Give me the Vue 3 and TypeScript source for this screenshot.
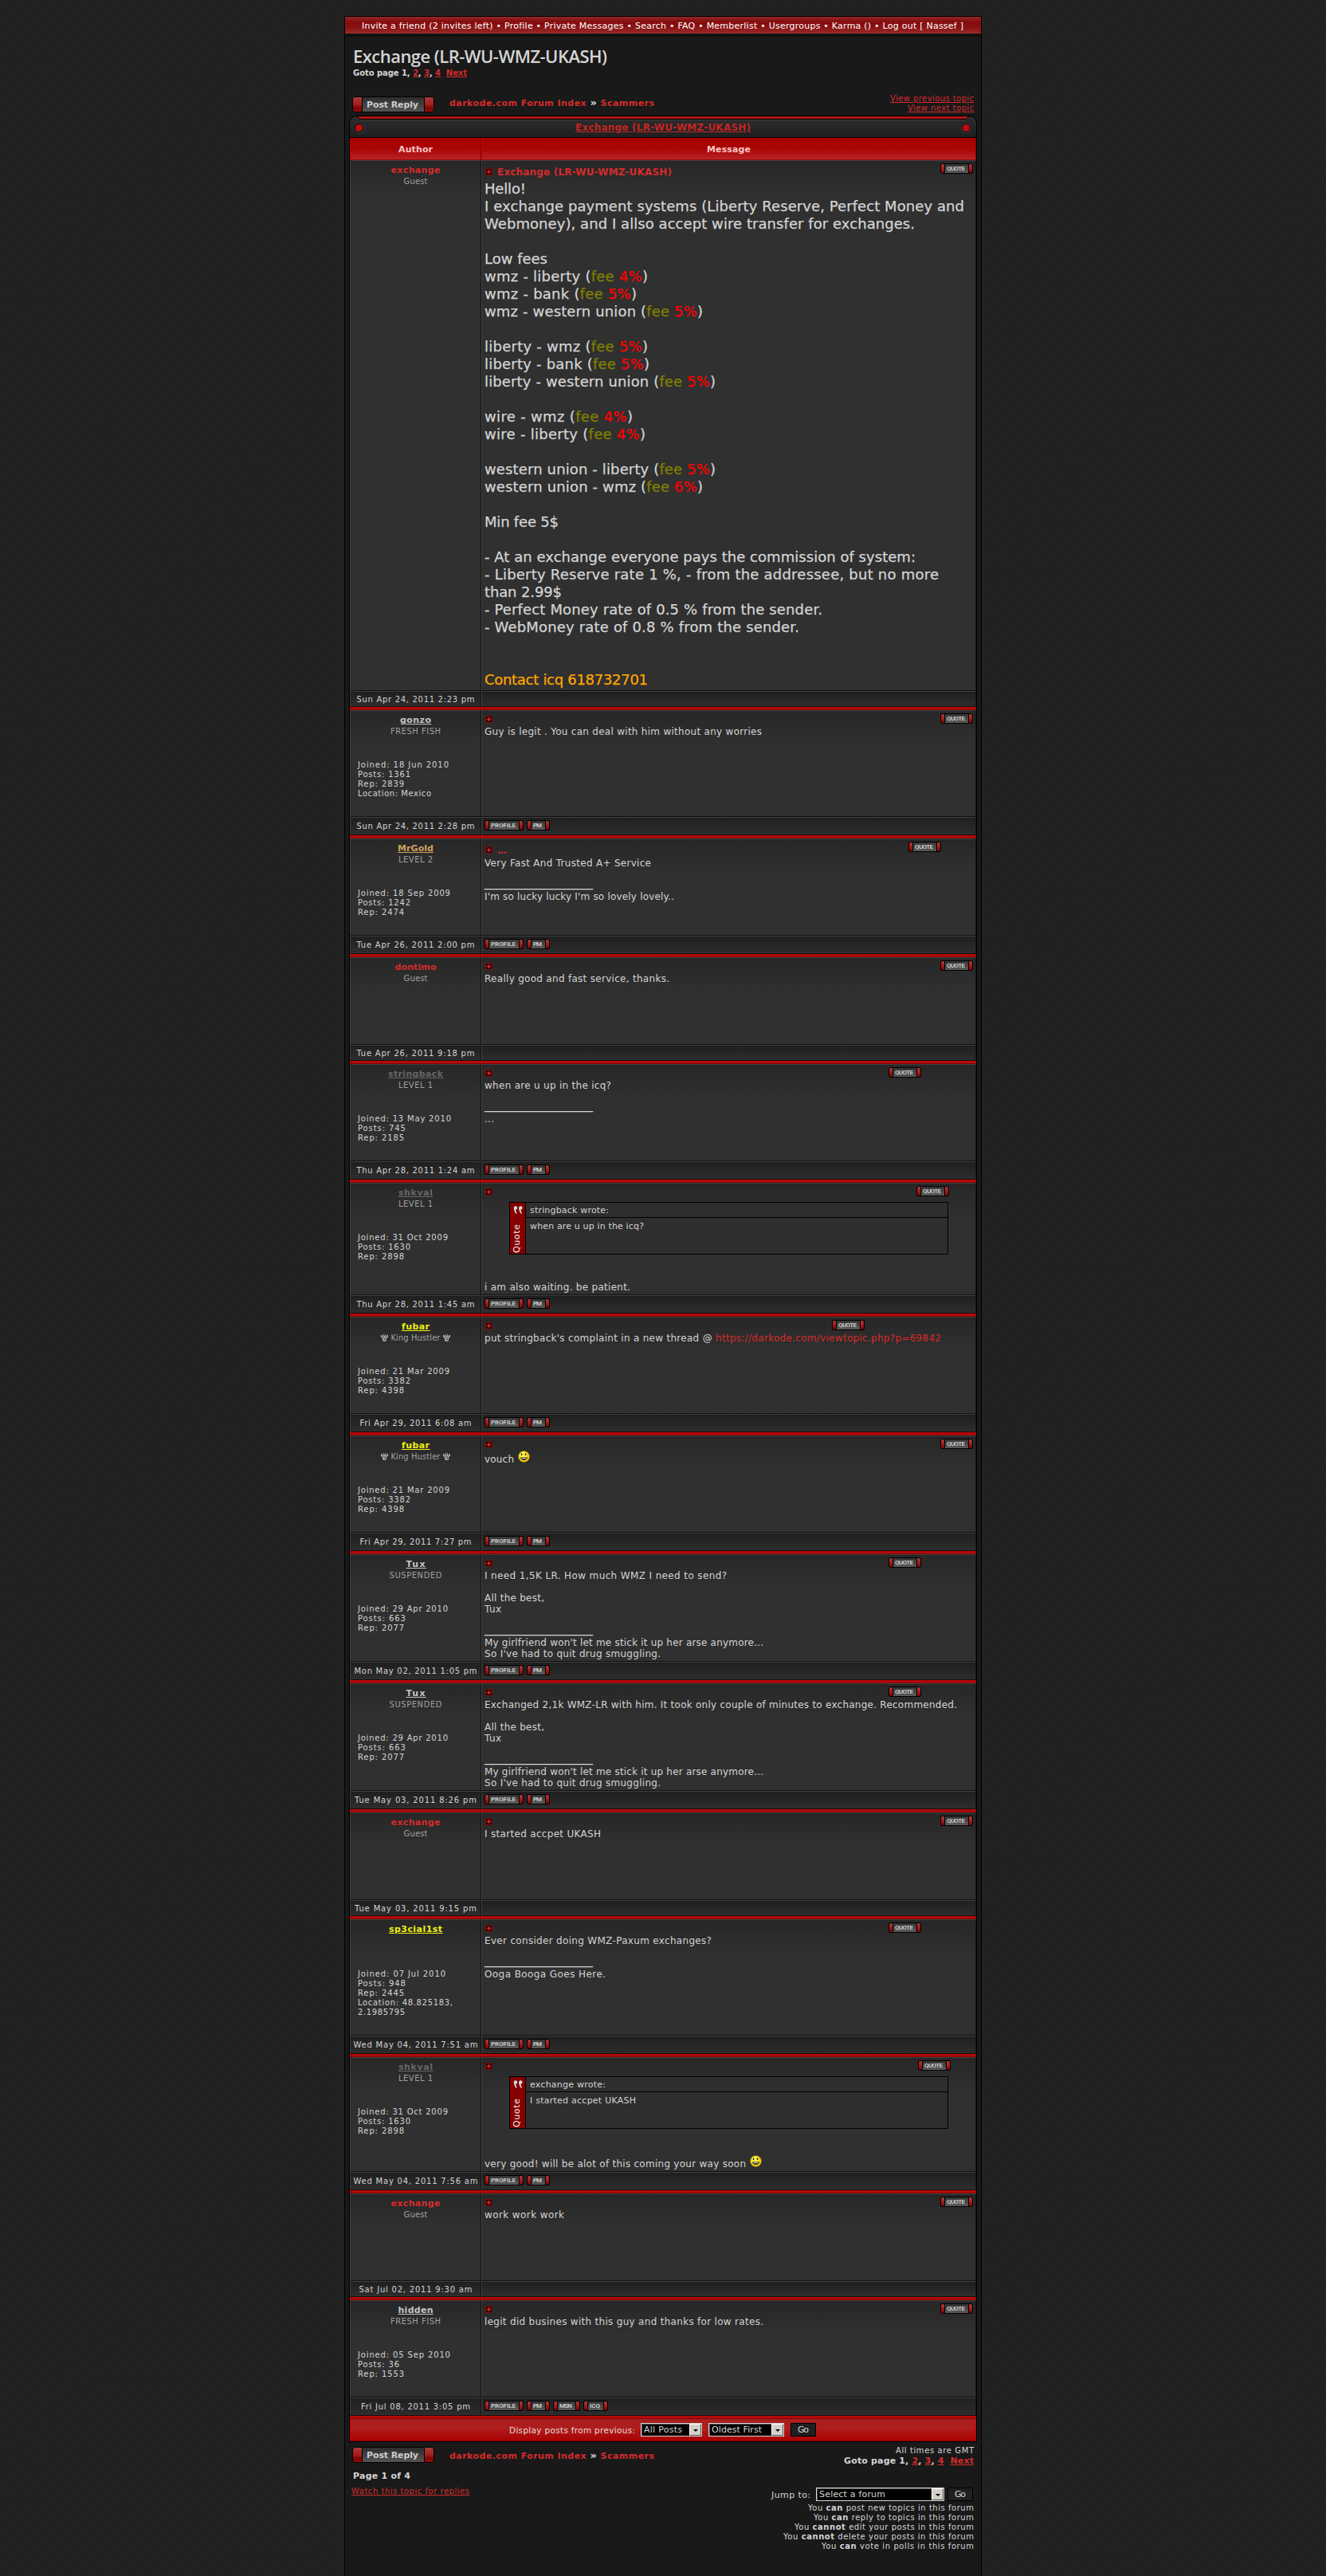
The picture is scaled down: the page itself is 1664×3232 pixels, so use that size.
<script setup lang="ts">
import type { Directive } from 'vue'

// Spreads a run of text to a given pixel width by adjusting its tracking.
const vFit: Directive<HTMLElement, number> = {
  mounted(el, { value }) {
    const gaps = (el.textContent ?? '').length - 1
    if (!value || gaps < 1) return
    const spacing = (value - el.getBoundingClientRect().width) / gaps
    el.style.letterSpacing = `${spacing}px`
    el.style.marginRight = `${-spacing}px`
  },
}

interface Part { t: string; c?: string }
interface Line { parts?: Part[]; w?: number; rule?: boolean; smiley?: boolean }
interface Info { t: string; w: number }
interface Post {
  name: string
  nameW: number
  tone: string
  rank?: string
  rankW?: number
  crowns?: boolean
  info: Info[]
  date: string
  dateW: number
  h: number
  title?: string
  titleW?: number
  head: number
  shift?: number
  big?: boolean
  quote?: { by: string; byW: number; text: string; textW: number }
  lines: Line[]
  buttons: string[]
}

const line = (t: string, w: number): Line => ({ parts: [{ t }], w })
const gap: Line = {}
const rule: Line = { rule: true }
const fee = (a: string, p: string, w: number): Line => ({
  parts: [{ t: a + ' (' }, { t: 'fee ', c: 'olive' }, { t: p, c: 'hot' }, { t: ')' }],
  w,
})

const postsWidth: Record<number, number> = { 2: 52, 3: 60, 4: 66 }
const stats = (joined: string, w: number, posts: string, rep: string): Info[] => [
  { t: `Joined: ${joined}`, w },
  { t: `Posts: ${posts}`, w: postsWidth[posts.length] },
  { t: `Rep: ${rep}`, w: 58 },
]

const buttonWidth: Record<string, number[]> = {
  PROFILE: [49, 31], PM: [29, 11], MSN: [34, 16], ICQ: [31, 13], QUOTE: [41, 23],
}
const std = ['PROFILE', 'PM']
const tuxSig = [
  gap, line('All the best,', 75), line('Tux', 21), gap, rule,
  line("My girlfriend won't let me stick it up her arse anymore...", 350),
  line("So I've had to quit drug smuggling.", 221),
]

const posts: Post[] = [
  {
    name: 'exchange', nameW: 62, tone: 'red', rank: 'Guest', rankW: 30, info: [],
    date: 'Sun Apr 24, 2011 2:23 pm', dateW: 148, h: 666,
    title: 'Exchange (LR-WU-WMZ-UKASH)', titleW: 219, head: 24, big: true,
    lines: [
      line('Hello!', 52),
      line('I exchange payment systems (Liberty Reserve, Perfect Money and', 602),
      line('Webmoney), and I allso accept wire transfer for exchanges.', 540),
      gap,
      line('Low fees', 79),
      fee('wmz - liberty', '4%', 205),
      fee('wmz - bank', '5%', 191),
      fee('wmz - western union', '5%', 274),
      gap,
      fee('liberty - wmz', '5%', 205),
      fee('liberty - bank', '5%', 207),
      fee('liberty - western union', '5%', 290),
      gap,
      fee('wire - wmz', '4%', 186),
      fee('wire - liberty', '4%', 202),
      gap,
      fee('western union - liberty', '5%', 290),
      fee('western union - wmz', '6%', 274),
      gap,
      line('Min fee 5$', 93),
      gap,
      line('- At an exchange everyone pays the commission of system:', 541),
      line('- Liberty Reserve rate 1 %, - from the addressee, but no more', 570),
      line('than 2.99$', 97),
      line('- Perfect Money rate of 0.5 % from the sender.', 424),
      line('- WebMoney rate of 0.8 % from the sender.', 395),
      gap, gap,
      { parts: [{ t: 'Contact icq 618732701', c: 'orange' }], w: 205 },
    ],
    buttons: [],
  },
  {
    name: 'gonzo', nameW: 39, tone: 'pale', rank: 'FRESH FISH', rankW: 63,
    info: [...stats('18 Jun 2010', 114, '1361', '2839'), { t: 'Location: Mexico', w: 92 }],
    date: 'Sun Apr 24, 2011 2:28 pm', dateW: 148, h: 134, head: 19,
    lines: [line('Guy is legit . You can deal with him without any worries', 348)],
    buttons: std,
  },
  {
    name: 'MrGold', nameW: 45, tone: 'gold', rank: 'LEVEL 2', rankW: 43,
    info: stats('18 Sep 2009', 116, '1242', '2474'),
    date: 'Tue Apr 26, 2011 2:00 pm', dateW: 148, h: 122,
    title: '...', titleW: 12, head: 23, shift: 40,
    lines: [line('Very Fast And Trusted A+ Service', 209), gap, rule, line("I'm so lucky lucky I'm so lovely lovely..", 238)],
    buttons: std,
  },
  {
    name: 'dontimo', nameW: 52, tone: 'red', rank: 'Guest', rankW: 30, info: [],
    date: 'Tue Apr 26, 2011 9:18 pm', dateW: 148, h: 110, head: 19,
    lines: [line('Really good and fast service, thanks.', 232)],
    buttons: [],
  },
  {
    name: 'stringback', nameW: 69, tone: 'grey', rank: 'LEVEL 1', rankW: 43,
    info: stats('13 May 2010', 117, '745', '2185'),
    date: 'Thu Apr 28, 2011 1:24 am', dateW: 148, h: 122, head: 19, shift: 65,
    lines: [line('when are u up in the icq?', 159), gap, rule, line('...', 12)],
    buttons: std,
  },
  {
    name: 'shkval', nameW: 43, tone: 'grey', rank: 'LEVEL 1', rankW: 43,
    info: stats('31 Oct 2009', 113, '1630', '2898'),
    date: 'Thu Apr 28, 2011 1:45 am', dateW: 148, h: 141, head: 23, shift: 30,
    quote: { by: 'stringback wrote:', byW: 99, text: 'when are u up in the icq?', textW: 143 },
    lines: [line('i am also waiting. be patient.', 183)],
    buttons: std,
  },
  {
    name: 'fubar', nameW: 35, tone: 'yellow', rank: 'King Hustler', rankW: 62, crowns: true,
    info: stats('21 Mar 2009', 115, '3382', '4398'),
    date: 'Fri Apr 29, 2011 6:08 am', dateW: 140, h: 122, head: 19, shift: 136,
    lines: [{
      parts: [{ t: "put stringback's complaint in a new thread @ " }, { t: 'https://darkode.com/viewtopic.php?p=69842', c: 'link' }],
      w: 573,
    }],
    buttons: std,
  },
  {
    name: 'fubar', nameW: 35, tone: 'yellow', rank: 'King Hustler', rankW: 62, crowns: true,
    info: stats('21 Mar 2009', 115, '3382', '4398'),
    date: 'Fri Apr 29, 2011 7:27 pm', dateW: 140, h: 122, head: 19,
    lines: [{ parts: [{ t: 'vouch' }], w: 37, smiley: true }],
    buttons: std,
  },
  {
    name: 'Tux', nameW: 24, tone: 'pale', rank: 'SUSPENDED', rankW: 66,
    info: stats('29 Apr 2010', 113, '663', '2077'),
    date: 'Mon May 02, 2011 1:05 pm', dateW: 154, h: 135, head: 19, shift: 65,
    lines: [line('I need 1,5K LR. How much WMZ I need to send?', 304), ...tuxSig],
    buttons: std,
  },
  {
    name: 'Tux', nameW: 24, tone: 'pale', rank: 'SUSPENDED', rankW: 66,
    info: stats('29 Apr 2010', 113, '663', '2077'),
    date: 'Tue May 03, 2011 8:26 pm', dateW: 153, h: 135, head: 19, shift: 65,
    lines: [line('Exchanged 2,1k WMZ-LR with him. It took only couple of minutes to exchange. Recommended.', 593), ...tuxSig],
    buttons: std,
  },
  {
    name: 'exchange', nameW: 62, tone: 'red', rank: 'Guest', rankW: 30, info: [],
    date: 'Tue May 03, 2011 9:15 pm', dateW: 153, h: 110, head: 19,
    lines: [line('I started accpet UKASH', 146)],
    buttons: [],
  },
  {
    name: 'sp3cial1st', nameW: 67, tone: 'yellow',
    info: [...stats('07 Jul 2010', 110, '948', '2445'), { t: 'Location: 48.825183,', w: 119 }, { t: '2.1985795', w: 59 }],
    date: 'Wed May 04, 2011 7:51 am', dateW: 156, h: 146, head: 19, shift: 65,
    lines: [line('Ever consider doing WMZ-Paxum exchanges?', 285), gap, rule, line('Ooga Booga Goes Here.', 152)],
    buttons: std,
  },
  {
    name: 'shkval', nameW: 43, tone: 'grey', rank: 'LEVEL 1', rankW: 43,
    info: stats('31 Oct 2009', 113, '1630', '2898'),
    date: 'Wed May 04, 2011 7:56 am', dateW: 156, h: 144, head: 23, shift: 28,
    quote: { by: 'exchange wrote:', byW: 95, text: 'I started accpet UKASH', textW: 133 },
    lines: [{ parts: [{ t: 'very good! will be alot of this coming your way soon' }], w: 328, smiley: true }],
    buttons: std,
  },
  {
    name: 'exchange', nameW: 62, tone: 'red', rank: 'Guest', rankW: 30, info: [],
    date: 'Sat Jul 02, 2011 9:30 am', dateW: 142, h: 110, head: 19,
    lines: [line('work work work', 100)],
    buttons: [],
  },
  {
    name: 'hidden', nameW: 44, tone: 'pale', rank: 'FRESH FISH', rankW: 63,
    info: stats('05 Sep 2010', 116, '36', '1553'),
    date: 'Fri Jul 08, 2011 3:05 pm', dateW: 137, h: 122, head: 19,
    lines: [line('legit did busines with this guy and thanks for low rates.', 350)],
    buttons: ['PROFILE', 'PM', 'MSN', 'ICQ'],
  },
]

const rules = [
  { can: 'can', rest: 'post new topics in this forum', w: 208 },
  { can: 'can', rest: 'reply to topics in this forum', w: 201 },
  { can: 'cannot', rest: 'edit your posts in this forum', w: 225 },
  { can: 'cannot', rest: 'delete your posts in this forum', w: 239 },
  { can: 'can', rest: 'vote in polls in this forum', w: 191 },
]
</script>

<template>
  <div class="page">
    <nav class="nav"><span v-fit="755">Invite a friend (2 invites left) • Profile • Private Messages • Search • FAQ • Memberlist • Usergroups • Karma () • Log out [ Nassef ]</span></nav>

    <header class="top">
      <h1><span v-fit="319">Exchange (LR-WU-WMZ-UKASH)</span></h1>
      <div class="goto"><span v-fit="143">Goto page 1, <a>2</a>, <a>3</a>, <a>4</a>&nbsp; <a>Next</a></span></div>
    </header>

    <div class="bar">
      <div class="reply"><i></i><b><span v-fit="65">Post Reply</span></b><i></i></div>
      <div class="crumb"><span v-fit="257">darkode.com Forum Index <em>»</em> Scammers</span></div>
      <div class="views">
        <div><a v-fit="105">View previous topic</a></div>
        <div><a v-fit="83">View next topic</a></div>
      </div>
    </div>

    <main class="board">
      <div class="cap">
        <svg class="lip" width="788" height="28" viewBox="0 0 788 28">
          <defs>
            <linearGradient id="capfill" x1="0" y1="0" x2="0" y2="1">
              <stop offset="0" stop-color="#2d2d2d" /><stop offset="1" stop-color="#1f1f1f" />
            </linearGradient>
            <radialGradient id="halo"><stop offset=".55" stop-color="#000" /><stop offset=".7" stop-color="#3a3a3a" /><stop offset="1" stop-color="#2a2a2a" stop-opacity="0" /></radialGradient>
          </defs>
          <path d="M0 28V9Q1 0 10 0H778Q787 0 788 9V28Z" fill="#000" />
          <path d="M1 27V9Q2 1 9 1Q12 2 14 4.500H774Q776 2 779 1Q786 1 787 9V27Z" fill="url(#capfill)" />
          <path d="M10 0H778L774 5H15Q12 4 10 0Z" fill="#000" />
          <path d="M11 1H777L774 4H15Q12 3 11 1Z" fill="#b01414" />
          <path d="M15 5.500H773" stroke="#3c3c3c" />
          <circle cx="13.500" cy="16" r="7.500" fill="url(#halo)" /><circle cx="12.500" cy="15.500" r="5" fill="#b80f0f" stroke="#140404" />
          <circle cx="774.500" cy="16" r="7.500" fill="url(#halo)" /><circle cx="774.500" cy="15.500" r="5" fill="#b80f0f" stroke="#140404" />
        </svg>
        <a class="captitle" v-fit="220">Exchange (LR-WU-WMZ-UKASH)</a>
      </div>

      <div class="rows">
        <div class="heads">
          <div class="th c1"><span v-fit="43">Author</span></div>
          <div class="th c2"><span v-fit="55">Message</span></div>
        </div>

        <template v-for="(p, i) in posts" :key="i">
          <div v-if="i" class="sep"></div>
          <div class="row" :style="{ height: p.h + 'px' }">
            <div class="cell c1 author">
              <div class="name" :class="p.tone"><span v-fit="p.nameW">{{ p.name }}</span></div>
              <div class="rank">
                <svg v-if="p.crowns" class="crown" width="9" height="9" viewBox="0 0 9 9"><path d="M0 1H2V3H3V0H4V2H5V0H6V3H7V1H9V4H8V5H7V8L6 9H3L2 8V5H1V4H0Z" fill="#a0a0a0" /><path d="M3 4H4V5H3ZM5 4H6V5H5ZM4 6H6V7H4Z" fill="#333" /></svg>
                <span v-if="p.rank" v-fit="p.rankW">{{ p.rank }}</span>
                <svg v-if="p.crowns" class="crown" width="9" height="9" viewBox="0 0 9 9"><path d="M0 1H2V3H3V0H4V2H5V0H6V3H7V1H9V4H8V5H7V8L6 9H3L2 8V5H1V4H0Z" fill="#a0a0a0" /><path d="M3 4H4V5H3ZM5 4H6V5H5ZM4 6H6V7H4Z" fill="#333" /></svg>
              </div>
              <div class="info">
                <div v-for="s in p.info" :key="s.t"><span v-fit="s.w">{{ s.t }}</span></div>
              </div>
            </div>
            <div class="cell c2 msg" :class="{ big: p.big }">
              <div class="mhead" :class="{ titled: p.title }" :style="{ height: p.head + 'px' }">
                <svg class="mini" width="9" height="9" viewBox="0 0 9 9"><path d="M.5.5H8.500V8.500H.5Z" fill="#260c0c" stroke="#860808" /><path d="M4 2H5V3H6V4H7V5H6V6H5V7H4V6H3V5H2V4H3V3H4Z" fill="#e01818" /></svg>
                <span v-if="p.title" class="mtitle" v-fit="p.titleW">{{ p.title }}</span>
                <div class="btn" :style="{ width: '41px', marginRight: (p.shift ?? 0) + 'px' }"><i></i><b><span v-fit="23">QUOTE</span></b><i></i></div>
              </div>
              <div v-if="p.quote" class="quote">
                <div class="qside">
                  <svg width="12" height="10" viewBox="0 0 12 10"><g fill="#ddd"><circle cx="3" cy="2.400" r="2.200" /><path d="M.8 2Q.5 6 3.500 10L4.800 9Q3 6.500 3.200 4Z" /><circle cx="9.300" cy="2.400" r="2.200" /><path d="M7.100 2Q6.800 6 9.800 10L11 9Q9.300 6.500 9.500 4Z" /></g></svg>
                  <span class="qv"><span>Quote</span></span>
                </div>
                <div class="qmain">
                  <div class="qby"><span v-fit="p.quote.byW">{{ p.quote.by }}</span></div>
                  <div class="qtext"><span v-fit="p.quote.textW">{{ p.quote.text }}</span></div>
                </div>
              </div>
              <div v-for="(l, k) in p.lines" :key="k" class="line">
                <span v-if="l.rule" class="rule">_________________</span>
                <span v-if="l.parts" v-fit="l.w ?? 0"><span v-for="(s, n) in l.parts" :key="n" :class="s.c">{{ s.t }}</span></span>
                <svg v-if="l.smiley" class="smiley" width="15" height="15" viewBox="0 0 15 15">
                  <circle cx="7.500" cy="7.500" r="7" fill="#f7cf10" stroke="#7d6a14" stroke-width=".6" />
                  <circle cx="6.500" cy="6" r="4.500" fill="#fff04a" />
                  <path d="M4.500 3.500V6M9.500 3.500V6" stroke="#111" stroke-width="1.300" />
                  <path d="M3 8.500H12Q11 12 7.500 12Q4 12 3 8.500Z" fill="#111" /><path d="M4.500 9.300H10.500V10.300H4.500Z" fill="#fff" />
                </svg>
              </div>
            </div>
          </div>
          <div class="row foot" :class="{ slim: !p.buttons.length }">
            <div class="cell c1 date"><span v-fit="p.dateW">{{ p.date }}</span></div>
            <div class="cell c2 tools">
              <div v-for="b in p.buttons" :key="b" class="btn" :style="{ width: buttonWidth[b][0] + 'px' }"><i></i><b><span v-fit="buttonWidth[b][1]">{{ b }}</span></b><i></i></div>
            </div>
          </div>
        </template>

        <div class="sep"></div>
        <div class="sort">
          <span class="lbl" v-fit="158">Display posts from previous:</span>
          <div class="sel s1"><span v-fit="48">All Posts</span><u></u></div>
          <div class="sel s2"><span v-fit="63">Oldest First</span><u></u></div>
          <div class="go"><span v-fit="14">Go</span></div>
        </div>
      </div>
    </main>

    <footer class="end">
      <div class="left">
        <div class="lrow">
          <div class="reply"><i></i><b><span v-fit="65">Post Reply</span></b><i></i></div>
          <div class="crumb"><span v-fit="257">darkode.com Forum Index <em>»</em> Scammers</span></div>
        </div>
        <div class="pageof"><span v-fit="72">Page 1 of 4</span></div>
        <div class="watch"><a v-fit="148">Watch this topic for replies</a></div>
      </div>
      <div class="right">
        <div class="gmt"><span v-fit="98">All times are GMT</span></div>
        <div class="pages"><span v-fit="163">Goto page 1, <a>2</a>, <a>3</a>, <a>4</a>&nbsp; <a>Next</a></span></div>
        <div class="jump">
          <span class="lbl" v-fit="49">Jump to:</span>
          <div class="sel s3"><span v-fit="83">Select a forum</span><u></u></div>
          <div class="go"><span v-fit="14">Go</span></div>
        </div>
        <div v-for="r in rules" :key="r.rest" class="perm"><span v-fit="r.w">You <b>{{ r.can }}</b> {{ r.rest }}</span></div>
      </div>
    </footer>
  </div>
</template>

<style>
body {
  background-color: #212121;
  background-image: repeating-linear-gradient(135deg, #1d1d1d 0, #1d1d1d 1.414px, #252525 1.414px, #252525 2.828px);
}
</style>

<style scoped>
.page {
  box-sizing: border-box;
  width: 800px;
  height: 3212px;
  margin: 20px auto 0;
  border: 1px solid #000;
  border-bottom: 0;
  background: #191919;
  color: #d4d4d4;
  font-family: "DejaVu Sans", Verdana, sans-serif;
  font-size: 10px;
  line-height: 12px;
  overflow: hidden;
  white-space: pre;
}
.page div, .page nav, .page header, .page footer, .page main { white-space: nowrap; box-sizing: border-box; }
.page span, .page a { white-space: pre; }
a { color: #d62b2b; text-decoration: underline; }
.nav {
  height: 24px;
  border-bottom: 1px solid #000;
  background:
    linear-gradient(#1c1c1c, #1c1c1c) 0 21px / 100% 3px no-repeat,
    repeating-linear-gradient(rgba(0,0,0,.1) 0 1px, rgba(255,255,255,.03) 1px 2px),
    linear-gradient(#9a2626 0, #8c1010 5px, #8e0707 8px, #8e1212 14px, #a32828 21px);
  color: #fff;
  font-size: 11px;
  line-height: 13px;
  padding: 5px 0 0 21px;
}
.top { height: 73px; padding: 11px 0 0 10px; }
h1 { margin: 0; font: 600 22px/28px "Open Sans", "DejaVu Sans", sans-serif; height: 30px; }
.goto { font-weight: bold; }
.bar { display: flex; height: 27px; padding-left: 9px; }
.reply {
  display: flex; width: 103px; height: 20px; margin-top: 3px; padding: 1px;
  background: #000; border-radius: 5px; overflow: hidden;
}
.reply i { width: 11px; background: linear-gradient(#a83a3a, #a51e1e 50%, #800404 75%, #960c0c); border-radius: 3px 0 0 3px; }
.reply i:last-child { border-radius: 0 3px 3px 0; }
.reply b {
  flex: 1; margin: 0 1px; padding: 3px 0 0 5px; font-size: 11px; line-height: 13px;
  color: #ccc; background: linear-gradient(#2c2c2c, #555);
}
.crumb { margin: 5px 0 0 19px; font-size: 11px; line-height: 13px; font-weight: bold; color: #d62b2b; }
.crumb em { font-style: normal; font-size: 13px; line-height: 0; color: #ddd; }
.views { margin-left: auto; margin-right: 9px; text-align: right; }
.board { width: 788px; margin-left: 5px; }
.cap { position: relative; height: 28px; padding-top: 8px; text-align: center; }
.lip { position: absolute; left: 0; top: 0; display: block; }
.captitle { position: relative; display: inline-block; font-size: 12px; line-height: 14px; font-weight: bold; color: #c42424; }
.rows { border: 1px solid #000; border-top: 0; }
.heads, .row { display: flex; }
.c1 { width: 165px; }
.c2 { width: 621px; }
.th {
  height: 28px; padding-top: 7px; text-align: center;
  font-weight: bold; font-size: 11px; line-height: 13px; color: #ffc4c4;
  border: 1px solid #c00505; border-top-color: #a00; border-right-color: #850000; border-bottom-color: #8f0808;
  background: repeating-linear-gradient(rgba(0,0,0,.1) 0 1px, transparent 1px 2px), linear-gradient(#b00000, #b20606 50%, #c02525);
}
.sep { height: 4px; background: linear-gradient(#c00000 0 1px, #ad0d0d 1px 3px, #8c0000 3px); }
.cell {
  border: 1px solid #404040;
  border-right-color: #111;
  border-bottom-color: #111;
  background: linear-gradient(#272727, #303030 42px);
}
.c2.cell { border-right-color: #161616; }
.foot { height: 23px; }
.foot.slim { height: 20px; }
.foot .cell { background: repeating-linear-gradient(rgba(0,0,0,.1) 0 1px, transparent 1px 3px), linear-gradient(#202020, #2f2f2f); }
.author { position: relative; text-align: center; padding-top: 5px; }
.name { height: 15px; font-size: 11px; line-height: 13px; font-weight: bold; text-decoration: underline; }
.name.red { color: #d62b2b; text-decoration: none; }
.pale { color: #c4c4c4; }
.gold { color: #cfa05c; }
.grey { color: #666; }
.yellow { color: #f0f010; }
.rank { display: flex; justify-content: center; height: 42px; color: #a0a0a0; }
.crown { margin: 1px 3.500px 0; }
.info { text-align: left; padding-left: 9px; }
.date { display: flex; align-items: center; justify-content: center; padding-top: 1px; }
.tools { display: flex; gap: 4px; padding: 3px 0 0 3px; }
.btn { display: flex; flex: none; height: 13px; padding: 1px; background: #000; border-radius: 3px; }
.btn i { width: 4px; background: linear-gradient(#b03a3a, #a51c1c 50%, #7c0202); border-radius: 2px 0 0 2px; }
.btn i:last-child { border-radius: 0 2px 2px 0; }
.btn b {
  flex: 1; margin: 0 1px; padding: 1px 0 0 2px; font: bold 8px/9px Roboto, "DejaVu Sans", sans-serif;
  color: #c8c8c8; background: linear-gradient(#333, #5a5a5a);
}
.msg { padding-left: 3px; }
.mhead { display: flex; align-items: flex-start; padding-right: 3px; }
.mini { display: block; flex: none; margin: 6px 0 0 1px; }
.titled .mini { margin-top: 9px; }
.mtitle { margin: 7px 0 0 6px; font-size: 12px; line-height: 14px; font-weight: bold; color: #d62b2b; }
.mhead .btn { margin-top: 3px; margin-left: auto; }
.line { font-size: 12px; line-height: 14px; min-height: 14px; }
.big .line { font-size: 18px; line-height: 22px; height: 22px; -webkit-text-stroke: .25px currentColor; }
.rule { display: inline-block; height: 14px; font-size: 16px; line-height: 14px; vertical-align: top; margin-top: -4px; }
.smiley { margin: -1px 0 0 5px; vertical-align: baseline; }
.olive { color: #808000; }
.hot { color: #f00; }
.orange { color: #ffa500; }
.link { color: #d62b2b; }
.quote {
  display: flex; width: 551px; height: 66px; margin: 0 0 34px 31px;
  border: 1px solid #000; background: #2e2e2e;
}
.qside { width: 20px; border-right: 1px solid #000; background: #860000; padding: 4px 0 0 4px; }
.qside svg { display: block; }
.qv { display: block; width: 12px; height: 42px; margin-top: 7px; margin-left: -1px; font-size: 11px; line-height: 12px; color: #eee; writing-mode: vertical-rl; transform: rotate(180deg); text-align: left; }
.qv span { letter-spacing: .6px; }
.qmain { flex: 1; font-size: 11px; line-height: 13px; }
.qby { height: 19px; border-bottom: 1px solid #000; padding: 3px 0 0 5px; }
.qtext { padding: 4px 0 0 5px; }
.sort {
  display: flex; height: 28px; padding: 5px 0 0 199px;
  border: 1px solid #c00; border-top: 0; border-bottom-color: #8f0000;
  background: repeating-linear-gradient(rgba(0,0,0,.1) 0 1px, transparent 1px 2px), linear-gradient(#b02020, #b82020 40%, #b40202);
}
.lbl { display: block; flex: none; margin-top: 3px; line-height: 13px; }
.sort .lbl { font-size: 10.500px; color: #e6dada; }
.sel {
  display: flex; flex: none; height: 17px; justify-content: space-between; padding-left: 3px;
  border: 1px solid #d8d5ce; border-right-width: 1px; background: #000; box-shadow: inset 1px 1px #555;
  font-size: 11px; line-height: 15px; color: #d6d6d6;
}
.sel u {
  position: relative; width: 15px; height: 15px; background: #d4d0c8; border: 1px solid #fff;
  border-right-color: #555; border-bottom-color: #555; box-sizing: border-box;
}
.sel u::after { content: ""; position: absolute; left: 4px; top: 6px; border: 3px solid transparent; border-top-color: #000; border-bottom: 0; }
.s1 { width: 77px; margin-left: 7px; }
.s2 { width: 95px; margin-left: 8px; }
.s3 { width: 161px; margin-left: 7px; }
.go { flex: none; width: 32px; height: 17px; margin-left: 8px; border: 1px solid #000; background: #202020; padding-left: 8px; font-size: 11px; line-height: 16px; text-align: left; }
.end { display: flex; justify-content: space-between; padding: 3px 9px 0 9px; }
.lrow { display: flex; }
.lrow .crumb { margin-top: 8px; }
.pageof { margin: 10px 0 0 1px; font-size: 11px; line-height: 13px; font-weight: bold; }
.left { padding-top: 0; }
.watch { margin-top: 7px; }
.watch a { margin-left: -1px; }
.right { text-align: right; padding-top: 2px; }
.gmt { height: 12px; }
.pages { font-size: 11px; line-height: 13px; font-weight: bold; }
.jump { display: flex; justify-content: flex-end; margin: 27px 1px 3px 0; }
.jump .lbl { font-size: 11px; }
.jump .sel { text-align: left; }
.jump .go { margin-left: 4px; }
.perm b { font-weight: bold; }
</style>
